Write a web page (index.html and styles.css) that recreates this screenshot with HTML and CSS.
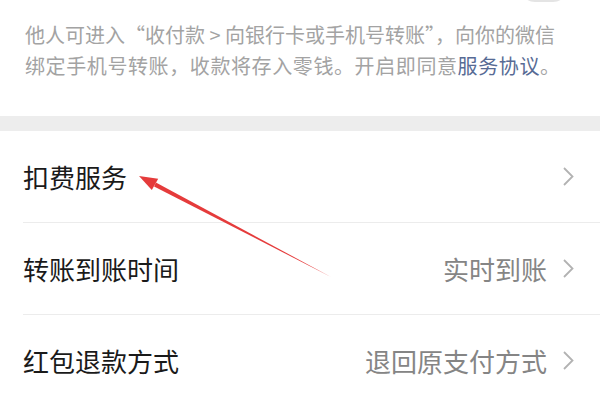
FILE: index.html
```html
<!DOCTYPE html>
<html lang="zh-CN">
<head>
    <meta charset="UTF-8">
    <meta name="viewport" content="width=device-width, initial-scale=1.0">
    <title>转账设置</title>
    <link rel="stylesheet" href="styles.css">
</head>
<body>
    <div class="page">
        <div class="switch-row">
            <div class="switch"></div>
        </div>
        <div class="note">
            <div class="line">他人可进入“收付款 &gt; 向银行卡或手机号转账”，向你的微信</div>
            <div class="line wide"><span>绑定手机号转账，收款将存入零钱。开启即同意</span><a class="link" href="#">服务协议</a><span>。</span></div>
        </div>

        <div class="gap"></div>

        <div class="list">
            <div class="cell">
                <span class="title">扣费服务</span>
                <span class="value"></span>
                <svg class="chevron" viewBox="0 0 11 19" width="11" height="19"><polyline points="1,1 9.5,9.5 1,18" fill="none" stroke="#b2b2b2" stroke-width="1.8"/></svg>
            </div>
            <div class="cell">
                <span class="title">转账到账时间</span>
                <span class="value">实时到账</span>
                <svg class="chevron" viewBox="0 0 11 19" width="11" height="19"><polyline points="1,1 9.5,9.5 1,18" fill="none" stroke="#b2b2b2" stroke-width="1.8"/></svg>
            </div>
            <div class="cell">
                <span class="title">红包退款方式</span>
                <span class="value">退回原支付方式</span>
                <svg class="chevron" viewBox="0 0 11 19" width="11" height="19"><polyline points="1,1 9.5,9.5 1,18" fill="none" stroke="#b2b2b2" stroke-width="1.8"/></svg>
            </div>
        </div>

        <svg class="marker" viewBox="0 0 600 400" width="600" height="400">
            <polygon points="331,277 155.9,182.4 154.1,186.4" fill="#e53b3b"/>
            <polygon points="139,176 158.2,178.8 151.8,190.0" fill="#e53b3b"/>
        </svg>
    </div>
</body>
</html>
```

FILE: styles.css
```css
body {
    margin: 0;
    background: #fff;
    font-family: "Noto Sans CJK SC", "Noto Sans", sans-serif;
}

.page {
    position: relative;
    width: 600px;
    height: 400px;
    overflow: hidden;
}

.switch-row {
    display: flex;
    justify-content: flex-end;
    padding-right: 32px;
    height: 0;
}

.switch {
    width: 48px;
    height: 30px;
    margin-top: -28px;
    border-radius: 15px;
    background: #e4e4e4;
}

.note {
    padding: 19px 0 35px 25px;
    font-size: 20px;
    line-height: 31px;
    color: #a3a3a3;
}

.line {
    white-space: nowrap;
}

.wide {
    letter-spacing: 0.6px;
}

.link {
    color: #576b95;
    text-decoration: none;
}

.gap {
    height: 15px;
    background: #ededed;
}

.list {
    padding-left: 23px;
}

.cell {
    display: flex;
    align-items: center;
    height: 91px;
    padding-right: 26px;
    border-bottom: 1px solid #ececec;
}

.title {
    flex: 1;
    font-size: 26px;
    color: #1a1a1a;
}

.value {
    font-size: 26px;
    color: #858585;
    margin-right: 16px;
}

.chevron {
    display: block;
}

.marker {
    position: absolute;
    left: 0;
    top: 0;
    pointer-events: none;
}
```
